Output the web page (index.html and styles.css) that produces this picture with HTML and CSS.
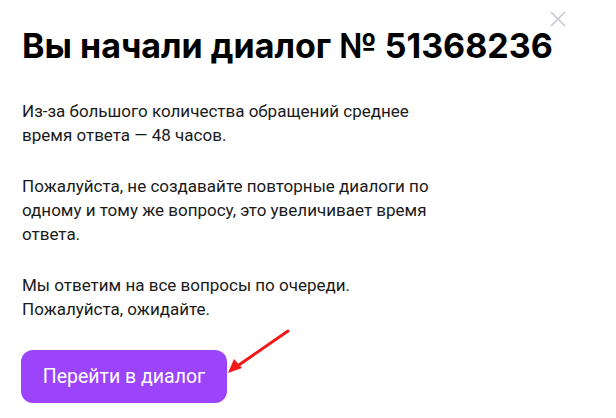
FILE: index.html
```html
<!DOCTYPE html>
<html>

<head>
  <meta charset="utf-8">
  <link rel="stylesheet" href="styles.css">
</head>

<body>
  <div class="modal">
    <button class="close" aria-label="Закрыть">
      <svg viewBox="0 0 16 16">
        <path d="M1 1L15 15M15 1L1 15" />
      </svg>
    </button>

    <h1 class="title">Вы начали диалог № 51368236</h1>

    <div class="content">
      <p class="text">Из-за большого количества обращений среднее<br>время ответа — 48 часов.</p>
      <p class="text">Пожалуйста, не создавайте повторные диалоги по<br>одному и тому же вопросу, это увеличивает время<br>ответа.</p>
      <p class="text">Мы ответим на все вопросы по очереди.<br>Пожалуйста, ожидайте.</p>
    </div>

    <div class="actions">
      <button class="button primary">Перейти в диалог</button>
      <svg class="arrow" viewBox="0 0 70 50">
        <path class="arrow-line" d="M66 3L14 39" />
        <path class="arrow-head" d="M6 45L12 31L20 40Z" />
      </svg>
    </div>
  </div>
</body>

</html>
```

FILE: styles.css
```css
* {
  box-sizing: border-box;
  margin: 0;
  padding: 0;
}

body {
  width: 616px;
  height: 418px;
  overflow: hidden;
  background: #fff;
  color: #000;
  font-family: Roboto, "Liberation Sans", Arial, sans-serif;
}

.modal {
  position: relative;
  padding: 26px 22px 0 22px;
}

.close {
  position: absolute;
  top: 11px;
  right: 50px;
  width: 16px;
  height: 16px;
  border: none;
  background: none;
  cursor: pointer;
}

.close svg {
  width: 16px;
  height: 16px;
  display: block;
}

.close path {
  stroke: #c9c9d1;
  stroke-width: 1.6;
  fill: none;
}

.title {
  font-family: Inter, Roboto, sans-serif;
  font-size: 34px;
  font-weight: 700;
  line-height: 40px;
  margin-bottom: 33px;
}

.content {
  display: flex;
  flex-direction: column;
  gap: 27px;
}

.text {
  font-size: 17px;
  line-height: 24px;
  color: #1a1a1a;
}

.actions {
  position: relative;
  margin-top: 29px;
  width: 210px;
}

.button {
  display: inline-flex;
  align-items: center;
  justify-content: center;
  border: none;
  border-radius: 12px;
  cursor: pointer;
  font-family: Roboto, sans-serif;
  font-size: 19.5px;
  font-weight: 400;
}

.button.primary {
  width: 206px;
  height: 53px;
  margin-left: -1px;
  background: #9b44fb;
  color: #fff;
}

.arrow {
  position: absolute;
  left: 200px;
  top: -22px;
  width: 70px;
  height: 50px;
  overflow: visible;
}

.arrow-line {
  stroke: #f21818;
  stroke-width: 3;
  stroke-linecap: round;
  fill: none;
}

.arrow-head {
  fill: #f21818;
}
```
